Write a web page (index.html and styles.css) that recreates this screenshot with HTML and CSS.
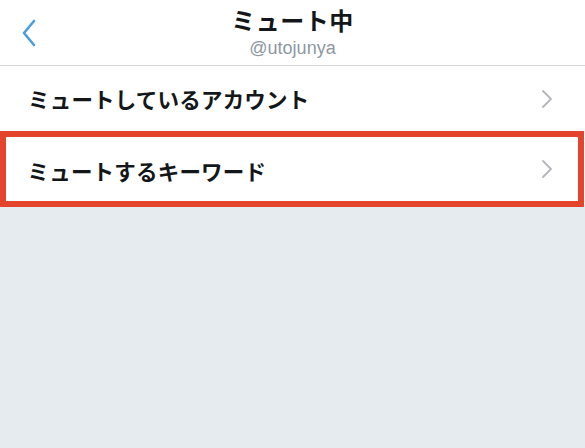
FILE: index.html
```html
<!DOCTYPE html>
<html lang="ja">
<head>
<meta charset="utf-8">
<link rel="stylesheet" href="styles.css">
</head>
<body>
<header class="nav">
  <div class="nav-left">
    <svg class="back" width="16" height="28" viewBox="0 0 16 28"><path d="M13 2 L3 14 L13 26" fill="none" stroke="#4a9de0" stroke-width="2.6" stroke-linecap="round" stroke-linejoin="round"/></svg>
  </div>
  <div class="nav-title">
    <div class="title">ミュート中</div>
    <div class="handle">@utojunya</div>
  </div>
  <div class="nav-right"></div>
</header>
<main class="list">
  <div class="row">
    <span class="label">ミュートしているアカウント</span>
    <svg class="chev" width="12" height="20" viewBox="0 0 12 20"><path d="M2 2 L10 10 L2 18" fill="none" stroke="#b5b5ba" stroke-width="1.8" stroke-linecap="round" stroke-linejoin="round"/></svg>
  </div>
  <div class="row row-highlight">
    <span class="label">ミュートするキーワード</span>
    <svg class="chev" width="12" height="20" viewBox="0 0 12 20"><path d="M2 2 L10 10 L2 18" fill="none" stroke="#b5b5ba" stroke-width="1.8" stroke-linecap="round" stroke-linejoin="round"/></svg>
  </div>
</main>
</body>
</html>
```
FILE: styles.css
```css
html, body {
  margin: 0;
  padding: 0;
}
body {
  width: 585px;
  height: 448px;
  background: #e6ebf0;
  font-family: "Noto Sans CJK JP", "Liberation Sans", sans-serif;
  color: #14171a;
  overflow: hidden;
}
.nav {
  height: 65px;
  background: #fff;
  border-bottom: 1px solid #d5d5d8;
  display: grid;
  grid-template-columns: 1fr auto 1fr;
  align-items: center;
}
.nav-left {
  padding-left: 21px;
  display: flex;
  align-items: center;
}
.back { display: block; }
.nav-title {
  display: flex;
  flex-direction: column;
  align-items: center;
  margin-top: -1px;
}
.title {
  font-size: 24px;
  font-weight: 700;
  line-height: 30px;
  letter-spacing: 0.5px;
}
.handle {
  font-family: "Liberation Sans", Arial, sans-serif;
  font-size: 18px;
  line-height: 22px;
  margin-top: 2px;
  color: #8c98a2;
}
.list {
  background: #fff;
}
.row {
  height: 65px;
  display: flex;
  align-items: center;
  justify-content: space-between;
  padding: 0 32px 0 28px;
  box-sizing: border-box;
}
.label {
  font-size: 21.5px;
  font-weight: 700;
  letter-spacing: 0.2px;
}
.chev { display: block; }
.row-highlight {
  height: 76px;
  width: 584px;
  border: 6.5px solid #e5442c;
  padding: 0 25.5px 0 21.5px;
}
.row-highlight .label {
  margin-top: 2px;
}
```
